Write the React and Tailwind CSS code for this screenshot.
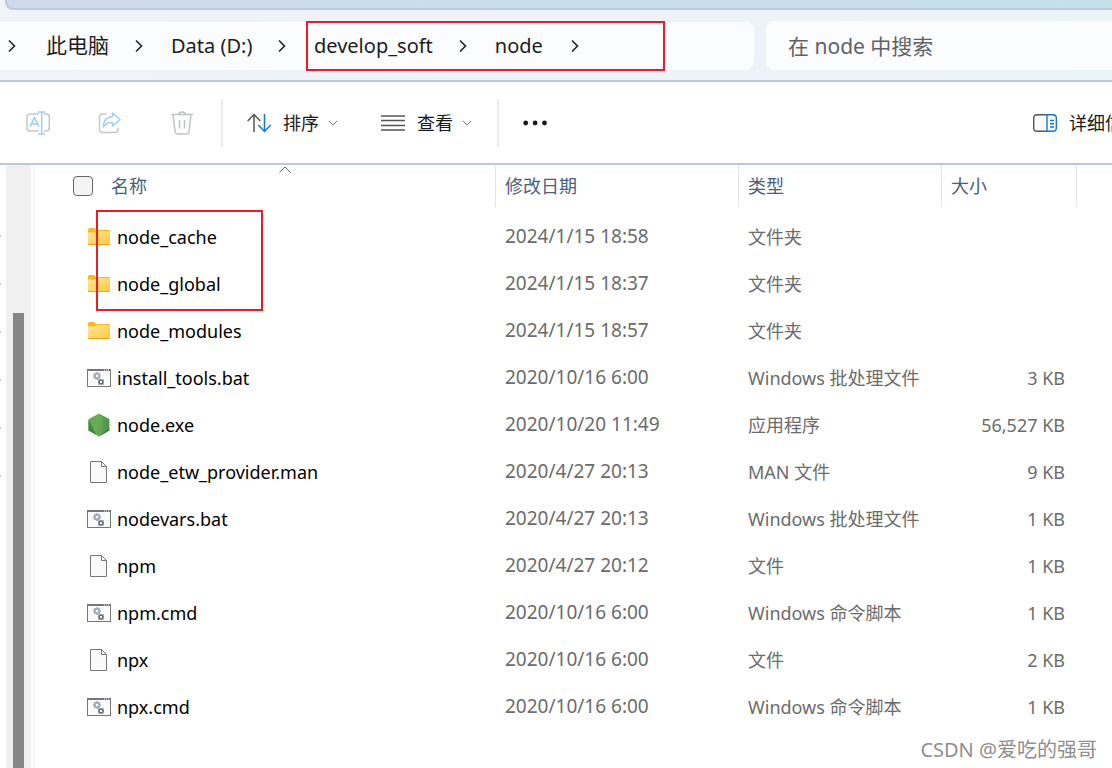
const CJK = "font-['Noto_Sans','Noto_Sans_CJK_SC',sans-serif]";

const FILES = [
  { name: 'node_cache', date: '2024/1/15 18:58', type: '文件夹', size: '', icon: 'folder' },
  { name: 'node_global', date: '2024/1/15 18:37', type: '文件夹', size: '', icon: 'folder' },
  { name: 'node_modules', date: '2024/1/15 18:57', type: '文件夹', size: '', icon: 'folder' },
  { name: 'install_tools.bat', date: '2020/10/16 6:00', type: 'Windows 批处理文件', size: '3 KB', icon: 'script' },
  { name: 'node.exe', date: '2020/10/20 11:49', type: '应用程序', size: '56,527 KB', icon: 'node' },
  { name: 'node_etw_provider.man', date: '2020/4/27 20:13', type: 'MAN 文件', size: '9 KB', icon: 'file' },
  { name: 'nodevars.bat', date: '2020/4/27 20:13', type: 'Windows 批处理文件', size: '1 KB', icon: 'script' },
  { name: 'npm', date: '2020/4/27 20:12', type: '文件', size: '1 KB', icon: 'file' },
  { name: 'npm.cmd', date: '2020/10/16 6:00', type: 'Windows 命令脚本', size: '1 KB', icon: 'script' },
  { name: 'npx', date: '2020/10/16 6:00', type: '文件', size: '2 KB', icon: 'file' },
  { name: 'npx.cmd', date: '2020/10/16 6:00', type: 'Windows 命令脚本', size: '1 KB', icon: 'script' },
];

function FolderIcon() {
  return (
    <svg width="24" height="24" viewBox="0 0 24 24" aria-hidden="true">
      <defs>
        <linearGradient id="folder" x1="0" y1="0" x2="1" y2="1">
          <stop offset="0" stopColor="#ffe69c" /><stop offset="1" stopColor="#ffca3c" />
        </linearGradient>
      </defs>
      <path d="M1 4.5Q1 3 2.500 3H7L9 5H22.500Q23 5 23 5.500V9H1Z" fill="#fbb81b" />
      <path d="M1 7.500H8L10 6H23V19.500H1Z" fill="url(#folder)" />
      <path d="M1 19.500H23" stroke="#e8a91e" />
    </svg>
  );
}

function ScriptIcon() {
  return (
    <svg width="24" height="24" viewBox="0 0 24 24" aria-hidden="true">
      <rect x="0.5" y="3.5" width="23" height="17" fill="#fafafa" stroke="#74767a" />
      <path d="M0 4H24" stroke="#74767a" strokeWidth="2" />
      <path d="M17 4H22" stroke="#f2f2f2" strokeWidth="1" strokeDasharray="1 1" />
      <circle cx="10" cy="10" r="2.300" fill="none" stroke="#a3adb8" strokeWidth="2" />
      <path d="M10 6V8M10 12V14M6 10H8M12 10H14M7.200 7.200L8.500 8.500M11.500 11.500L12.800 12.800M7.200 12.800L8.500 11.500M11.500 8.500L12.800 7.200" stroke="#a3adb8" strokeWidth="1.500" />
      <circle cx="14" cy="16" r="2" fill="#fff" stroke="#59636b" strokeWidth="1.600" />
      <path d="M11.500 13.500L12.500 14.500M15.500 17.500L16.500 18.500M11.500 18.500L12.500 17.500M15.500 14.500L16.500 13.500" stroke="#59636b" />
    </svg>
  );
}

function FileIcon() {
  return (
    <svg width="24" height="24" viewBox="0 0 24 24" aria-hidden="true">
      <path d="M3.500 1.500H14.500L19.500 6.500V22.500H3.500Z" fill="#fafafa" stroke="#74767a" />
      <path d="M14.500 1.500V6.500H19.500" fill="none" stroke="#74767a" />
    </svg>
  );
}

function NodeIcon() {
  return (
    <svg width="24" height="24" viewBox="0 0 24 24" aria-hidden="true">
      <defs>
        <linearGradient id="nodeFace" x1="0" y1="0" x2="1" y2="0.300">
          <stop offset="0" stopColor="#5fa845" /><stop offset="0.500" stopColor="#69ad57" /><stop offset="1" stopColor="#579b50" />
        </linearGradient>
      </defs>
      <path d="M12 0.500L22.300 6.300V17.600L12 23.500L1.500 17.600V6.300Z" fill="url(#nodeFace)" />
      <path d="M1.500 6.800L9.500 22L1.500 17.600Z" fill="#3f873f" />
      <path d="M15.500 2.500L22.300 6.300V17.600L16 21.200Z" fill="#4e944a" opacity="0.500" />
      <path d="M12 23.500L22.300 15V17.600Z" fill="#39803d" />
    </svg>
  );
}

const ICONS = { folder: FolderIcon, script: ScriptIcon, node: NodeIcon, file: FileIcon };

function CrumbArrow() {
  return (
    <svg width="8" height="14" viewBox="0 0 8 14" fill="none" stroke="#222" strokeWidth="1.600" className="shrink-0" aria-hidden="true">
      <path d="M1 1.500L6.500 7L1 12.500" />
    </svg>
  );
}

function DownArrow() {
  return (
    <svg width="10" height="6" viewBox="0 0 10 6" fill="none" stroke="#777" aria-hidden="true">
      <path d="M1 1L5 5L9 1" />
    </svg>
  );
}

function AddressBar() {
  return (
    <div className="flex items-end gap-3 bg-linear-to-r from-[#f0f3f9] to-[#ebf4f8] border-b-2 border-[#bccad8] pt-[11px] pb-[10px]">
      <nav aria-label="路径" className="flex w-[754px] h-12 shrink items-center rounded-r-lg bg-[#fbfcfe] text-xl text-[#1c1c1c] whitespace-nowrap">
        <div className="flex w-[306px] shrink-0 items-center pl-2">
          <CrumbArrow />
          <a href="#pc" className="ml-[30px] text-[21px]">此电脑</a>
          <span className="ml-[26px]"><CrumbArrow /></span>
          <a href="#d" className="ml-7">Data (D:)</a>
          <span className="ml-[26px]"><CrumbArrow /></span>
        </div>
        <div className="-my-1 flex h-[50px] w-[359px] items-center border-2 border-[#ed1c24] pl-[6px]">
          <a href="#develop_soft">develop_soft</a>
          <span className="ml-[26px]"><CrumbArrow /></span>
          <a href="#node" className="ml-7">node</a>
          <span className="ml-7"><CrumbArrow /></span>
        </div>
      </nav>
      <input type="search" aria-label="搜索" placeholder="在 node 中搜索"
        className="h-[49px] min-w-0 flex-1 rounded-l-lg bg-[#fbfcfe] pl-[22px] text-[21px] text-[#5f6265] placeholder:text-[#5f6265] outline-none" />
    </div>
  );
}

function Toolbar() {
  return (
    <div className="flex h-[83px] items-center border-b-2 border-[#bccad8] bg-white text-lg text-[#1a1a1a] whitespace-nowrap">
      <div className="flex shrink-0 gap-12 pl-[26px]">
        <button type="button" aria-label="重命名">
          <svg width="24" height="24" viewBox="0 0 24 24" fill="none" strokeWidth="1.500">
            <path d="M13 3H4Q1 3 1 6V17Q1 20 4 20H13M18 3H20Q23.300 3 23.300 6V17Q23.300 20 20 20H18" stroke="#c5c7c9" />
            <path d="M4 16L8.500 6.500L13 16M5.500 13H11.500M15.700 1V23M12 1H19M12 23H19" stroke="#a0cdf0" />
          </svg>
        </button>
        <button type="button" aria-label="共享">
          <svg width="24" height="24" viewBox="0 0 24 24" fill="none" strokeWidth="1.500" strokeLinejoin="round">
            <path d="M8.500 3H5Q1.500 3 1.500 6.500V18Q1.500 21.500 5 21.500H16.500Q20 21.500 20 18V16.500" stroke="#c5c7c9" />
            <path d="M14.500 2L22 8.500L14.500 15V11.500Q8.500 11 5 16Q6 6 14.500 5.500Z" stroke="#a0cdf0" />
          </svg>
        </button>
        <button type="button" aria-label="删除">
          <svg width="24" height="24" viewBox="0 0 24 24" fill="none" stroke="#c0c2c4" strokeWidth="1.500">
            <path d="M1 3.500H23M8.500 3.500Q9 1 12 1Q15 1 15.500 3.500M3 3.500L5 20.500Q5.300 23 8 23H16Q18.700 23 19 20.500L21 3.500M9.500 9V17.500M14.500 9V17.500" />
          </svg>
        </button>
      </div>
      <div className="ml-[27px] flex h-12 shrink-0 items-center border-x-2 border-[#ececec] pl-6">
        <button type="button" className="flex w-[134px] items-center">
          <svg width="24" height="20" viewBox="0 0 24 20" fill="none" strokeWidth="1.500">
            <path d="M7 19V1.500M0.700 8L7 1.500L13.300 8" stroke="#555" />
            <path d="M17.500 1V18.500M11.200 12L17.500 18.500L23.800 12" stroke="#0c7bd6" />
          </svg>
          <span className="ml-3 mr-[9px]">排序</span>
          <DownArrow />
        </button>
        <button type="button" className="flex w-[116px] items-center">
          <svg width="24" height="18" viewBox="0 0 24 18" fill="none" stroke="#555" strokeWidth="1.300">
            <path d="M0 2H24M0 6.500H24M0 11.500H24M0 16H24" />
          </svg>
          <span className="ml-3 mr-[9px]">查看</span>
          <DownArrow />
        </button>
      </div>
      <button type="button" aria-label="更多" className="ml-6 shrink-0">
        <svg width="24" height="6" viewBox="0 0 24 6" fill="#1a1a1a">
          <circle cx="2.700" cy="3" r="2.400" /><circle cx="12.100" cy="3" r="2.400" /><circle cx="21.500" cy="3" r="2.400" />
        </svg>
      </button>
      <button type="button" className="ml-auto flex w-[79px] items-center gap-3 overflow-hidden">
        <svg width="24" height="18" viewBox="0 0 24 18" fill="none" strokeWidth="1.400" className="shrink-0">
          <path d="M14 0.700H4Q0.700 0.700 0.700 4V14Q0.700 17.300 4 17.300H14" fill="#fafafa" stroke="#555" />
          <path d="M14 0.700H20Q23.300 0.700 23.300 4V14Q23.300 17.300 20 17.300H14ZM17 6.500H21M17 9.700H21M17 13H21" stroke="#0c7bd6" />
        </svg>
        <span>详细信息</span>
      </button>
    </div>
  );
}

function FileTable() {
  return (
    <table className="w-full table-fixed text-lg text-[#6b6b6b] whitespace-nowrap">
      <colgroup>
        <col className="w-[461px]" /><col className="w-[243px]" /><col className="w-[203px]" /><col className="w-[135px]" /><col />
      </colgroup>
      <thead className="text-left text-[#4a5d7c]">
        <tr>
          <th className="p-0 pb-[6px] font-normal">
            <div className="relative flex h-[42px] items-center border-r border-[#e3e3e3] pl-[38px]">
              <input type="checkbox" id="all" aria-label="全选" className="size-5 appearance-none rounded-sm border border-[#666] bg-[#f3f3f3]" />
              <label htmlFor="all" className="ml-[18px]">名称</label>
              <svg width="12" height="7" viewBox="0 0 12 7" fill="none" stroke="#666" className="absolute left-[244px] top-px" aria-hidden="true">
                <path d="M0.500 6.500L6 1L11.500 6.500" />
              </svg>
            </div>
          </th>
          {['修改日期', '类型', '大小'].map((h) => (
            <th key={h} className="p-0 pb-[6px] font-normal">
              <div className="flex h-[42px] items-center border-r border-[#e3e3e3] pl-[9px]">{h}</div>
            </th>
          ))}
          <th className="p-0" />
        </tr>
      </thead>
      <tbody>
        {FILES.map((f) => {
          const Icon = ICONS[f.icon];
          return (
            <tr key={f.name} className="h-[47px]">
              <td className="p-0">
                <div className="flex items-center gap-[6px] pl-[52px] text-black"><Icon />{f.name}</div>
              </td>
              <td className="p-0 pl-[9px] text-[19px]">{f.date}</td>
              <td className="p-0 pl-[9px]">{f.type}</td>
              <td className="p-0 pr-3 text-right">{f.size}</td>
              <td className="p-0" />
            </tr>
          );
        })}
      </tbody>
    </table>
  );
}

export default function App() {
  return (
    <div className={`relative flex min-h-screen flex-col overflow-hidden bg-white ${CJK}`}>
      <div className="bg-[#f0f4f9] pl-[5px]">
        <div className="h-[10px] rounded-bl-lg border-b-2 border-l-2 border-[#bccbdc] bg-linear-to-r from-[#d0daeb] to-[#c4e1ea]" />
      </div>
      <AddressBar />
      <Toolbar />
      <div className="flex flex-1">
        <div className="flex w-[6px] flex-col gap-[46px] pt-[70px]">
          {[1, 2, 3, 4, 5, 6].map((n) => <span key={n} className="h-[2px] w-px bg-[#c4c4c4]" />)}
        </div>
        <div className="flex w-[25px] shrink-0 bg-[#f0f0f0] pl-[7px] pt-[148px]">
          <div className="w-[11px] bg-[#868686]" />
        </div>
        <div className="ml-[2px] w-[2px] shrink-0 bg-[#f7f7f7]" />
        <main className="relative min-w-0 flex-1">
          <FileTable />
          <div className="pointer-events-none absolute left-[61px] top-[45px] h-[101px] w-[167px] border-2 border-[#ed1c24]" />
        </main>
      </div>
      <div className="absolute bottom-1 right-[15px] text-xl text-[#8e8e8e]">CSDN @爱吃的强哥</div>
    </div>
  );
}
